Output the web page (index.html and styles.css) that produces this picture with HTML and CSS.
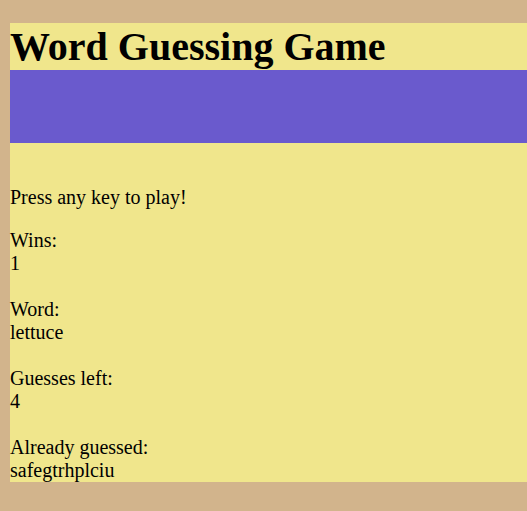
FILE: index.html
```html
<!DOCTYPE html>
<html lang="en">
<head>
<meta charset="utf-8">
<title>Word Guessing Game</title>
<link rel="stylesheet" href="styles.css">
</head>
<body>
<div class="game">
  <h1 class="title">Word Guessing Game</h1>
  <div class="banner"></div>
  <div class="content">
    <p class="prompt">Press any key to play!</p>
    <div class="stat">
      <div class="label">Wins:</div>
      <div class="value">1</div>
    </div>
    <div class="stat">
      <div class="label">Word:</div>
      <div class="value">lettuce</div>
    </div>
    <div class="stat">
      <div class="label">Guesses left:</div>
      <div class="value">4</div>
    </div>
    <div class="stat">
      <div class="label">Already guessed:</div>
      <div class="value">safegtrhplciu</div>
    </div>
  </div>
</div>
</body>
</html>
```

FILE: styles.css
```css
html {
  background: #d2b48c;
}
body {
  margin: 0;
  padding: 23px 0 29px 10px;
  font-family: "Liberation Serif", "Times New Roman", serif;
  color: #000;
}
.game {
  background: #f0e68c;
}
.title {
  margin: 0;
  font-size: 40px;
  line-height: 47px;
  font-weight: bold;
}
.banner {
  height: 73px;
  background: #6a5acd;
}
.content {
  padding-top: 43px;
  font-size: 20px;
  line-height: 23px;
  display: flex;
  flex-direction: column;
  gap: 23px;
}
.prompt {
  margin: 0 0 -3px 0;
}
```
